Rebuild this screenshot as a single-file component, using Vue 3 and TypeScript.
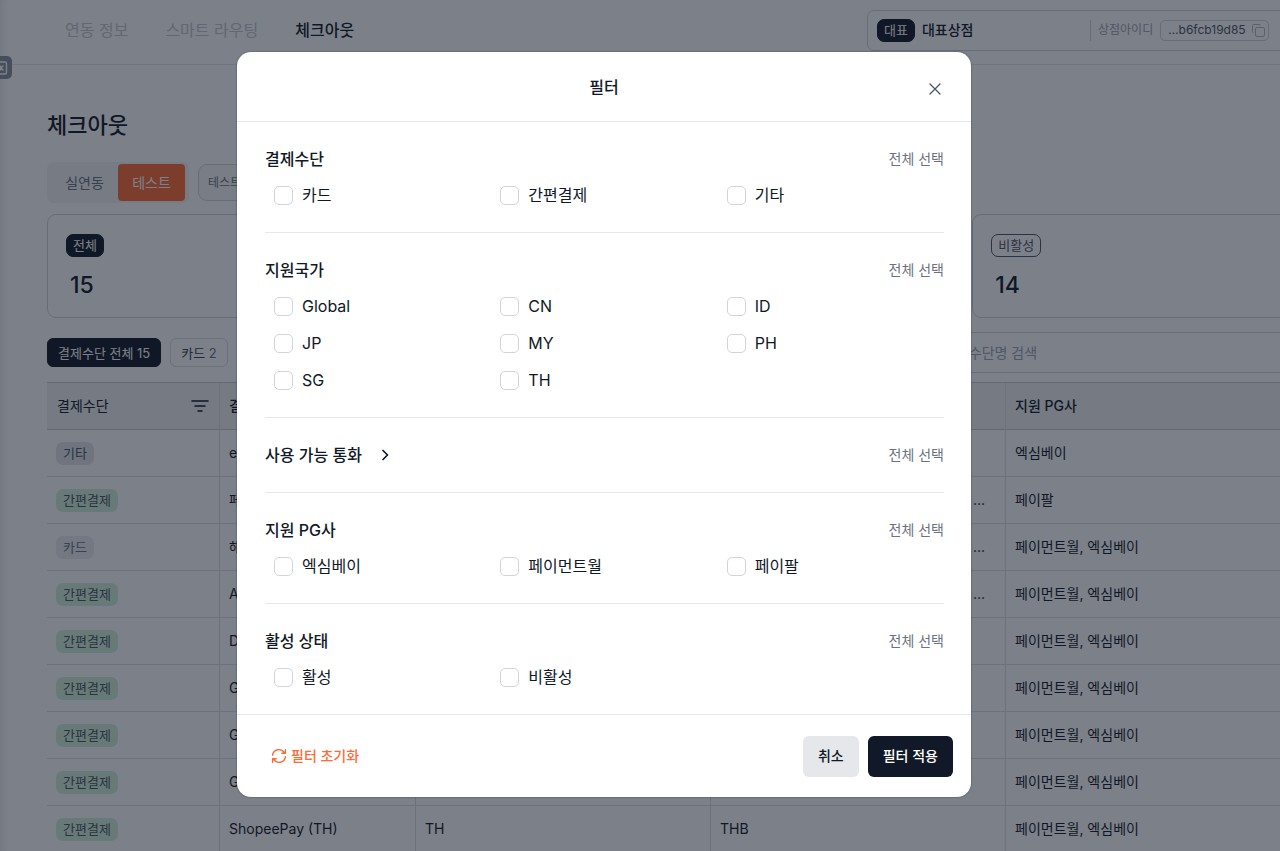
<script setup lang="ts">
import { ref } from 'vue'

interface FilterSection {
  id: string
  title: string
  options: string[]
  collapsed?: boolean
}

interface PaymentRow {
  type: '카드' | '간편결제' | '기타'
  name: string
  country: string
  currency: string
  pg: string
}

const navItems = ['연동 정보', '스마트 라우팅', '체크아웃']
const activeNav = '체크아웃'

const stats = [
  { label: '전체', value: 15, kind: 'solid' },
  { label: '활성', value: 1, kind: 'outline' },
  { label: '비활성', value: 14, kind: 'outline' },
]

const sections: FilterSection[] = [
  { id: 'method', title: '결제수단', options: ['카드', '간편결제', '기타'] },
  { id: 'country', title: '지원국가', options: ['Global', 'CN', 'ID', 'JP', 'MY', 'PH', 'SG', 'TH'] },
  { id: 'currency', title: '사용 가능 통화', options: [], collapsed: true },
  { id: 'pg', title: '지원 PG사', options: ['엑심베이', '페이먼트월', '페이팔'] },
  { id: 'status', title: '활성 상태', options: ['활성', '비활성'] },
]

const both = '페이먼트월, 엑심베이'
const currencies = 'USD, KRW, JPY, EUR, GBP, CNY, HKD ...'
const rows: PaymentRow[] = [
  { type: '기타', name: 'eximbay', country: 'Global', currency: 'USD', pg: '엑심베이' },
  { type: '간편결제', name: '페이팔', country: 'Global', currency: currencies, pg: '페이팔' },
  { type: '카드', name: '해외카드', country: 'Global', currency: currencies, pg: both },
  { type: '간편결제', name: 'Alipay', country: 'CN', currency: currencies, pg: both },
  { type: '간편결제', name: 'DANA', country: 'ID', currency: 'IDR', pg: both },
  { type: '간편결제', name: 'GCash', country: 'PH', currency: 'PHP', pg: both },
  { type: '간편결제', name: 'GrabPay (MY)', country: 'MY', currency: 'MYR', pg: both },
  { type: '간편결제', name: 'GrabPay (SG)', country: 'SG', currency: 'SGD', pg: both },
  { type: '간편결제', name: 'ShopeePay (TH)', country: 'TH', currency: 'THB', pg: both },
]

const tagClass: Record<PaymentRow['type'], string> = {
  카드: 'tag-card',
  간편결제: 'tag-easy',
  기타: 'tag-etc',
}

const selected = ref<string[]>([])

function selectAll(section: FilterSection) {
  const keys = section.options.map((o) => `${section.id}:${o}`)
  selected.value = Array.from(new Set([...selected.value, ...keys]))
}

function reset() {
  selected.value = []
}
</script>

<template>
  <div class="app">
    <div class="page">
      <header class="topbar">
        <nav class="nav">
          <a v-for="item in navItems" :key="item" href="#" :class="{ active: item === activeNav }">{{ item }}</a>
        </nav>
        <div class="shop">
          <div class="shop-name">
            <span class="pill solid">대표</span>
            <strong>대표상점</strong>
          </div>
          <div class="shop-id">
            <span class="shop-id-label">상점아이디</span>
            <button type="button" class="id-chip">
              ...b6fcb19d85
              <svg width="13" height="13" viewBox="0 0 13 13" fill="none" stroke="currentColor" aria-hidden="true">
                <rect x="3.5" y="3.5" width="9" height="9" rx="1.5" />
                <path d="M1.5 8.5h-.3a.7.7 0 0 1-.7-.7V1.5a1 1 0 0 1 1-1h6.3a.7.7 0 0 1 .7.7v.3" />
              </svg>
            </button>
          </div>
        </div>
      </header>

      <main class="content">
        <h1>체크아웃</h1>
        <div class="modes">
          <div class="segmented">
            <button type="button">실연동</button>
            <button type="button" class="on">테스트</button>
          </div>
          <button type="button" class="mode-info">테스트 안내</button>
        </div>

        <div class="stats">
          <section v-for="s in stats" :key="s.label" class="stat">
            <span class="pill" :class="s.kind">{{ s.label }}</span>
            <span class="stat-value">{{ s.value }}</span>
          </section>
        </div>

        <div class="toolbar">
          <button type="button" class="chip dark">결제수단 전체 15</button>
          <button type="button" class="chip">카드 <span>2</span></button>
          <input class="search" type="search" placeholder="결제수단명 검색" aria-label="결제수단명 검색" />
        </div>

        <table>
          <colgroup>
            <col class="c-type" />
            <col class="c-name" />
            <col class="c-mid" />
            <col class="c-mid" />
            <col />
          </colgroup>
          <thead>
            <tr>
              <th class="first">
                <div class="th-in">
                  결제수단
                  <svg width="18" height="12" viewBox="0 0 18 12" fill="none" stroke="currentColor" stroke-width="1.5" stroke-linecap="round" aria-hidden="true">
                    <path d="M1 1h16M4 6h10M7 11h4" />
                  </svg>
                </div>
              </th>
              <th>결제수단명</th>
              <th>지원 국가</th>
              <th>사용 가능 통화</th>
              <th>지원 PG사</th>
            </tr>
          </thead>
          <tbody>
            <tr v-for="row in rows" :key="row.name">
              <td><span class="tag" :class="tagClass[row.type]">{{ row.type }}</span></td>
              <td>{{ row.name }}</td>
              <td>{{ row.country }}</td>
              <td>{{ row.currency }}</td>
              <td>{{ row.pg }}</td>
            </tr>
          </tbody>
        </table>
      </main>
    </div>

    <button type="button" class="side-toggle" aria-label="사이드바 접기">
      <svg width="14" height="14" viewBox="0 0 14 14" fill="none" stroke="currentColor" stroke-width="1.4" aria-hidden="true">
        <rect x=".5" y="1" width="12" height="12" rx="1.5" />
        <path d="M9.5 4.5 7 7l2.5 2.5M6.5 4.5v5" />
      </svg>
    </button>

    <div class="overlay">
      <form class="modal" role="dialog" aria-labelledby="filter-title" @submit.prevent>
        <header class="modal-head">
          <h2 id="filter-title">필터</h2>
          <button type="button" class="close" aria-label="닫기">
            <svg width="12" height="12" viewBox="0 0 12 12" fill="none" stroke="currentColor" stroke-width="1.3" stroke-linecap="round" aria-hidden="true">
              <path d="M1 1l10 10M11 1L1 11" />
            </svg>
          </button>
        </header>

        <div class="modal-body">
          <section v-for="s in sections" :key="s.id" class="section">
            <div class="section-head">
              <h3>
                {{ s.title }}
                <button v-if="s.collapsed" type="button" class="expand" aria-label="펼치기">
                  <svg width="8" height="12" viewBox="0 0 8 12" fill="none" stroke="currentColor" stroke-width="1.7" stroke-linecap="round" stroke-linejoin="round" aria-hidden="true">
                    <path d="M2 1.5 6.5 6 2 10.5" />
                  </svg>
                </button>
              </h3>
              <button type="button" class="all" @click="selectAll(s)">전체 선택</button>
            </div>
            <div v-if="s.options.length" class="options">
              <label v-for="o in s.options" :key="o">
                <input v-model="selected" type="checkbox" :value="`${s.id}:${o}`" />
                {{ o }}
              </label>
            </div>
          </section>
        </div>

        <footer class="modal-foot">
          <button type="button" class="reset" @click="reset">
            <svg width="16" height="16" viewBox="0 0 16 16" fill="none" stroke="currentColor" stroke-width="1.4" stroke-linecap="round" stroke-linejoin="round" aria-hidden="true">
              <path d="M1.6 7.2A6.3 6.3 0 0 1 13.4 5M14.4 1.8v3.5h-3.5" />
              <path d="M14.4 8.8A6.3 6.3 0 0 1 2.6 11M1.6 14.2v-3.5h3.5" />
            </svg>
            필터 초기화
          </button>
          <div class="actions">
            <button type="button" class="btn light">취소</button>
            <button type="submit" class="btn dark">필터 적용</button>
          </div>
        </footer>
      </form>
    </div>
  </div>
</template>

<style>
body {
  margin: 0;
}
</style>

<style scoped>
.app {
  position: relative;
  height: 100vh;
  overflow: hidden;
  background: #fff;
  color: #111827;
  font-family: Inter, 'Noto Sans CJK KR', sans-serif;
  font-size: 14px;
  line-height: 20px;
}

.app * {
  box-sizing: border-box;
}

button,
input {
  font: inherit;
  color: inherit;
  margin: 0;
}

button {
  border: 0;
  background: none;
  padding: 0;
  white-space: nowrap;
  cursor: pointer;
}

h1,
h2,
h3 {
  margin: 0;
  font-weight: 500;
}

svg {
  display: block;
  flex: none;
}

.page {
  width: calc(100% + 190px);
  box-shadow: inset 8px 0 8px -6px #e5e7eb;
}

/* Top bar */
.topbar {
  display: flex;
  align-items: center;
  justify-content: space-between;
  height: 65px;
  padding: 0 47px 4px;
  border-bottom: 1px solid #e5e7eb;
}

.nav {
  display: flex;
  gap: 1px;
  font-size: 16px;
}

.nav a {
  padding: 0 18px;
  color: #c4c8d0;
  text-decoration: none;
}

.nav a.active {
  color: #111827;
  font-weight: 500;
}

.shop {
  display: flex;
  align-items: center;
  width: 556px;
  height: 41px;
  padding: 0 9px;
  border: 1px solid #d1d5db;
  border-radius: 7px;
}

.shop-name {
  display: flex;
  align-items: center;
  gap: 7px;
  width: 213px;
}

.shop-name strong {
  font-weight: 500;
}

.pill {
  padding: 0 6px;
  border: 1px solid #4b5563;
  border-radius: 7px;
  font-size: 13px;
  line-height: 21px;
  color: #4b5563;
}

.pill.solid {
  border-color: #111827;
  background: #111827;
  color: #fff;
}

.shop-id {
  display: flex;
  align-items: center;
  gap: 7px;
  padding-left: 7px;
  border-left: 1px solid #d1d5db;
}

.shop-id-label {
  font-size: 12px;
  color: #9ca3af;
}

.id-chip {
  display: flex;
  align-items: center;
  gap: 6px;
  height: 21px;
  padding: 0 3px 0 7px;
  border: 1px solid #d1d5db;
  border-radius: 5px;
  font-size: 12px;
  color: #4b5563;
}

.id-chip svg {
  color: #b4b9c2;
}

/* Content */
.content {
  padding: 44px 47px 0;
}

h1 {
  font-size: 22px;
  line-height: 32px;
}

.modes {
  display: flex;
  align-items: center;
  gap: 9px;
  margin-top: 21px;
}

.segmented {
  display: flex;
  padding: 2px 4px;
  border-radius: 7px;
  background: #f3f4f6;
}

.segmented button {
  width: 67px;
  height: 37px;
  border-radius: 4px;
  color: #6b7280;
}

.segmented .on {
  background: #ff6b35;
  color: #fff;
}

.mode-info {
  height: 37px;
  padding: 0 9px;
  border: 1px solid #d1d5db;
  border-radius: 9px;
  background: #f9fafb;
  font-size: 12px;
  color: #6b7280;
}

.stats {
  display: grid;
  grid-template-columns: repeat(3, 1fr);
  gap: 12px;
  margin-top: 11px;
}

.stat {
  display: flex;
  flex-direction: column;
  align-items: flex-start;
  gap: 12px;
  padding: 19px 18px 16px;
  border: 1px solid #d1d5db;
  border-radius: 9px;
}

.stat-value {
  padding-left: 4px;
  font-size: 23px;
  line-height: 32px;
  font-weight: 500;
}

.toolbar {
  display: flex;
  align-items: center;
  gap: 9px;
  margin-top: 14px;
}

.chip {
  height: 29px;
  padding: 0 10px;
  border: 1px solid #d9dce1;
  border-radius: 6px;
  font-size: 13px;
  color: #374151;
}

.chip span {
  color: #6b7280;
}

.chip.dark {
  border-color: #111827;
  background: #111827;
  color: #fff;
}

.search {
  width: 518px;
  height: 41px;
  margin-left: auto;
  padding: 0 37px;
  border: 1px solid #d1d5db;
  border-radius: 7px;
  background: none;
}

.search::placeholder {
  color: #9ca3af;
  opacity: 1;
}

table {
  width: 100%;
  margin-top: 9px;
  table-layout: fixed;
  border-collapse: separate;
  border-spacing: 0;
  border-top: 1px solid #c9cdd4;
}

.c-type {
  width: 173px;
}

.c-name {
  width: 196px;
}

.c-mid {
  width: 295px;
}

th,
td {
  height: 47px;
  padding: 0 10px 0 9px;
  border-bottom: 1px solid #dcdfe4;
  border-right: 1px solid #dcdfe4;
  text-align: left;
  white-space: nowrap;
}

th {
  border-bottom-color: #c9cdd4;
  background: #f0f1f3;
  font-weight: 500;
}

th.first {
  padding-left: 10px;
  font-weight: 400;
}

.th-in {
  display: flex;
  align-items: center;
  justify-content: space-between;
}

.tag {
  display: inline-block;
  padding: 0 7px;
  border-radius: 7px;
  font-size: 13px;
  line-height: 23px;
  color: #4b5563;
}

.tag-easy {
  background: #d3f2dc;
}

.tag-card {
  background: #eceef2;
  color: #6b7280;
}

.tag-etc {
  background: #e2e5ea;
}

.side-toggle {
  position: absolute;
  top: 56px;
  left: 0;
  display: flex;
  align-items: center;
  justify-content: flex-end;
  width: 12px;
  height: 23px;
  padding-right: 4px;
  border-radius: 0 5px 5px 0;
  background: #8b919c;
  color: #fff;
  overflow: hidden;
}

/* Filter dialog */
.overlay {
  position: absolute;
  inset: 0;
  display: flex;
  align-items: center;
  justify-content: center;
  padding: 0 72px 2px 0;
  background: rgba(17, 24, 39, 0.55);
}

.modal {
  width: 734px;
  max-width: 100%;
  border-radius: 14px;
  background: #fff;
  box-shadow: 0 0 2px rgba(17, 24, 39, 0.5);
}

.modal-head {
  display: grid;
  grid-template-columns: 1fr auto 1fr;
  align-items: center;
  height: 70px;
  padding: 0 27px;
  border-bottom: 1px solid #e5e7eb;
}

.modal-head h2 {
  grid-column: 2;
  font-size: 16px;
  line-height: 24px;
}

.close {
  justify-self: end;
  padding: 6px 3px 2px;
  color: #4b5563;
}

.modal-body {
  padding: 0 27px 0 28px;
}

.section {
  padding: 25px 0;
}

.section + .section {
  border-top: 1px solid #e5e7eb;
}

.section-head {
  display: flex;
  align-items: center;
  justify-content: space-between;
}

.section-head h3 {
  display: flex;
  align-items: center;
  font-size: 16px;
  line-height: 24px;
}

.expand {
  padding: 4px;
  margin-left: 15px;
}

.all {
  color: #6b7280;
}

.options {
  display: grid;
  grid-template-columns: repeat(3, 1fr);
  row-gap: 13px;
  margin-top: 12px;
}

.options label {
  display: flex;
  align-items: center;
  gap: 9px;
  padding-left: 9px;
  font-size: 16px;
  line-height: 24px;
  cursor: pointer;
}

.options input {
  appearance: none;
  width: 19px;
  height: 19px;
  border: 1px solid #d1d5db;
  border-radius: 5px;
  background: #fff;
}

.options input:checked {
  border-color: #111827;
  background: #111827;
}

.modal-foot {
  display: flex;
  align-items: center;
  justify-content: space-between;
  height: 83px;
  padding: 0 18px 0 34px;
  border-top: 1px solid #e5e7eb;
}

.reset {
  display: flex;
  align-items: center;
  gap: 4px;
  color: #ff6b35;
  font-weight: 500;
}

.actions {
  display: flex;
  gap: 9px;
}

.btn {
  height: 41px;
  padding: 0 15px;
  border-radius: 6px;
  font-weight: 500;
}

.btn.light {
  background: #e5e7eb;
}

.btn.dark {
  background: #111827;
  color: #fff;
}
</style>
